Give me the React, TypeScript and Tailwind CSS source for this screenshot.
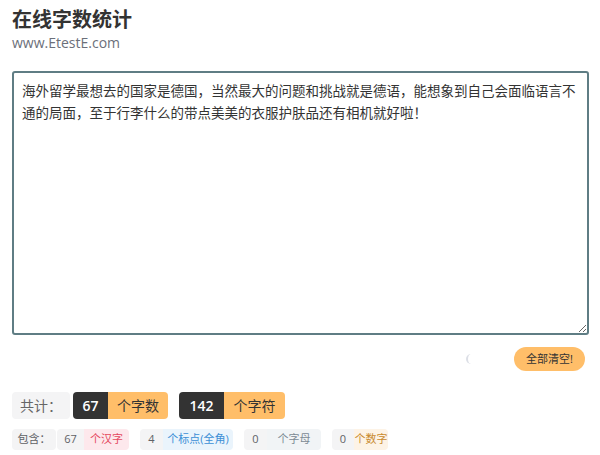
import { useState } from "react";

const sample =
  "海外留学最想去的国家是德国，当然最大的问题和挑战就是德语，能想象到自己会面临语言不通的局面，至于行李什么的带点美美的衣服护肤品还有相机就好啦！";

type Part = { n: number; label: string; tone: string; nw: string; lw: string };

export default function App() {
  const [text, setText] = useState(sample);

  const han = (text.match(/[\u4e00-\u9fa5]/g) || []).length;
  const punct = (text.match(/[\uff00-\uffef\u3000-\u303f]/g) || []).length;
  const letters = (text.match(/[a-zA-Z]/g) || []).length;
  const digits = (text.match(/[0-9]/g) || []).length;
  const bytes = han * 2 + punct * 2 + (text.length - han - punct);

  const parts: Part[] = [
    { n: han, label: "个汉字", tone: "bg-[#fde8ec] text-[#e5485f]", nw: "w-[27px]", lw: "w-[45px]" },
    { n: punct, label: "个标点(全角)", tone: "bg-[#eaf4fc] text-[#3b8fd6]", nw: "w-[23px]", lw: "w-[70px]" },
    { n: letters, label: "个字母", tone: "bg-[#f1f4f6] text-[#7c8a94]", nw: "w-[23px]", lw: "w-[54px]" },
    { n: digits, label: "个数字", tone: "bg-[#fdf3e6] text-[#c98a2e]", nw: "w-[22px]", lw: "w-[34px]" },
  ];

  return (
    <div
      className="min-h-[455px] bg-white px-3 pt-[7px] text-[#303133]"
      style={{ fontFamily: '"Open Sans", "Noto Sans CJK SC", sans-serif' }}
    >
      <h1 className="text-[20px] font-bold leading-[26px] text-[#333]">在线字数统计</h1>
      <p className="text-[14px] leading-[20px] text-[#6b6f7a]">www.EtestE.com</p>

      <textarea
        value={text}
        onChange={(e) => setText(e.target.value)}
        className="mt-[18px] block h-[264px] w-[577px] resize-y rounded-[3px] border-2 border-[#5f7d84] px-[8px] py-[7px] text-[13.5px] leading-[22px] text-[#333] outline-none"
      />

      <div className="mt-3 flex h-[24px] items-center justify-end gap-[38px] pr-[3px]">
        <span className="block h-[10px] w-[10px] rounded-full border-l-2 border-[#dcdfe6]" />
        <button
          onClick={() => setText("")}
          className="h-[24px] w-[71px] rounded-full bg-[#ffbe69] text-[11px] text-[#333]"
        >
          全部清空!
        </button>
      </div>

      <div className="mt-[21px] flex h-[27px] items-stretch text-[14px]">
        <div className="flex w-[58px] items-center justify-center rounded-[4px] bg-[#f4f4f5] text-[#666]">
          共计：
        </div>
        <div className="ml-[3px] flex overflow-hidden rounded-[4px]">
          <span className="flex w-[35px] items-center justify-center bg-[#333] font-semibold text-white">
            {han + letters + digits}
          </span>
          <span className="flex w-[60px] items-center justify-center bg-[#ffbe69] text-[#333]">个字数</span>
        </div>
        <div className="ml-[11px] flex overflow-hidden rounded-[4px]">
          <span className="flex w-[45px] items-center justify-center bg-[#333] font-semibold text-white">
            {bytes}
          </span>
          <span className="flex w-[61px] items-center justify-center bg-[#ffbe69] text-[#333]">个字符</span>
        </div>
      </div>

      <div className="mt-[10px] flex h-[21px] items-stretch text-[11px]">
        <div className="flex w-[44px] items-center justify-center rounded-[4px] bg-[#f4f4f5] text-[#606266]">
          包含：
        </div>
        {parts.map((p, i) => (
          <div key={p.label} className={`flex overflow-hidden rounded-[4px] ${i === 0 ? "ml-[1px]" : "ml-[11px]"}`}>
            <span className={`flex items-center justify-center bg-[#f4f4f5] text-[#606266] ${p.nw}`}>
              {p.n}
            </span>
            <span className={`flex items-center justify-center whitespace-nowrap ${p.lw} ${p.tone}`}>{p.label}</span>
          </div>
        ))}
      </div>
    </div>
  );
}
